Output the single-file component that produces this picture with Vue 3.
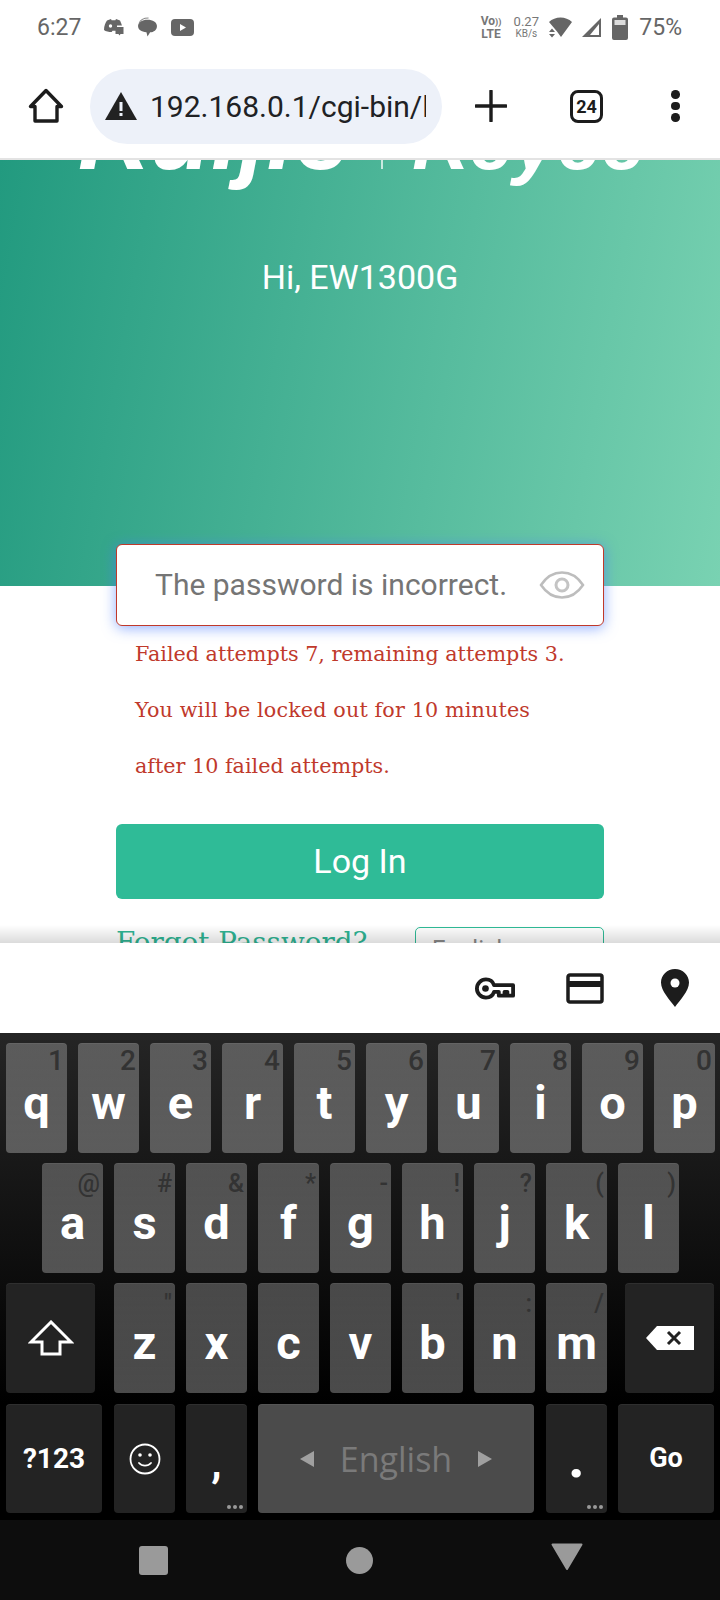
<script setup>
const row1 = [['q','1'],['w','2'],['e','3'],['r','4'],['t','5'],['y','6'],['u','7'],['i','8'],['o','9'],['p','0']]
const row2 = [['a','@'],['s','#'],['d','&'],['f','*'],['g','-'],['h','!'],['j','?'],['k','('],['l',')']]
const row3 = [['z','"'],['x',''],['c',''],['v',''],['b',"'"],['n',':'],['m','/']]
</script>

<template>
  <div class="phone">
    <header class="status">
      <span class="time">6:27</span>
      <svg class="st discord" width="21" height="18" viewBox="0 0 21 18"><path fill="#666" d="M4 2.500 8 1l.6 1.200h3.800L13 1l4 1.500c1 2 2 5 2 5h-5v5.200H9.500l-.8 1.300C6 14 2.500 13.500 1 12c0-4 1.500-7.500 3-9.500z"/><circle cx="7.500" cy="8" r="1.700" fill="#fff"/><path fill="#666" d="M12.500 9h8v7h-3l-1 1.500-1-1.500h-3z"/></svg>
      <svg class="st bubble" width="21" height="20" viewBox="0 0 20 19"><path fill="#666" d="M10 2.500c5 0 9 2.200 9 6s-3 6-6.500 6L10 18.500l-1-4C4 14 1 12 1 8.500s4-6 9-6z"/><path fill="none" stroke="#888" d="M2 6c1-3 4-5 9-5"/></svg>
      <svg class="st yt" width="23" height="17" viewBox="0 0 23 17"><rect width="23" height="17" rx="4" fill="#666"/><path fill="#fff" d="M9 5l6 3.500L9 12z"/></svg>
      <span class="spacer"></span>
      <div class="volte"><span>Vo<i>))</i></span><span>LTE</span></div>
      <div class="speed"><span>0.27</span><span>KB/s</span></div>
      <svg class="st wifi" width="25" height="24" viewBox="0 0 25 24"><path fill="#666" d="M1 7c6-6 17-6 23 0L13 22l-4-5.500z"/><path fill="#666" d="M1 17h6l-3-3.500zM1 19h6l-3 3.500z"/></svg>
      <svg class="st signal" width="21" height="21" viewBox="0 0 21 21"><path fill="#666" d="M20 1v19H1z"/><path fill="#fff" d="M18 7v11h-9z"/></svg>
      <svg class="st batt" width="16" height="25" viewBox="0 0 16 25"><path fill="#666" d="M5 0h6v2.500h3a2 2 0 0 1 2 2V23a2 2 0 0 1-2 2H2a2 2 0 0 1-2-2V4.500a2 2 0 0 1 2-2h3z"/><rect x="2.500" y="5" width="11" height="5" fill="#ddd"/></svg>
      <span class="pct">75%</span>
    </header>

    <nav class="toolbar">
      <svg class="home" width="36" height="36" viewBox="0 0 36 36"><path fill="none" stroke="#1c1c1c" stroke-width="3.400" stroke-linejoin="round" d="M18 2.500 2.500 18.500H7V33h22V18.500h4.500z"/></svg>
      <div class="omnibox">
        <svg width="32" height="28" viewBox="0 0 32 28"><path fill="#222" d="M16 0 32 28H0z"/><rect x="14.500" y="10" width="3" height="9" fill="#edf1f9"/><rect x="14.500" y="21" width="3" height="3" fill="#edf1f9"/></svg>
        <span class="url">192.168.0.1/cgi-bin/luci</span>
      </div>
      <svg class="plus" width="32" height="32" viewBox="0 0 32 32"><path stroke="#1c1c1c" stroke-width="3.400" stroke-linecap="round" d="M16 1v30M1 16h30"/></svg>
      <div class="tabs">24</div>
      <div class="dots"><i></i><i></i><i></i></div>
    </nav>

    <main class="page">
      <section class="hero">
        <div class="logo"><span class="ruijie">Ruijie</span><b></b><span class="reyee">Reyee</span></div>
        <h1>Hi, EW1300G</h1>
      </section>
      <form class="form" @submit.prevent>
        <div class="field">
          <span class="ph">The password is incorrect.</span>
          <svg class="eye" width="46" height="30" viewBox="0 0 46 30"><path fill="none" stroke="#bdbdbd" stroke-width="2.500" d="M2 15C8 6 15 2.500 23 2.500S38 6 44 15c-6 9-13 12.500-21 12.500S8 24 2 15z"/><circle cx="23" cy="15" r="6" fill="none" stroke="#c4c4c4" stroke-width="3"/></svg>
        </div>
        <div class="errors">
          <p>Failed attempts 7, remaining attempts 3.</p>
          <p class="loose">You will be locked out for 10 minutes</p>
          <p>after 10 failed attempts.</p>
        </div>
        <button class="login" type="button">Log In</button>
        <div class="links">
          <a class="forgot">Forgot Password?</a>
          <div class="lang">English</div>
        </div>
      </form>
      <div class="fade"></div>
    </main>

    <div class="accessory">
      <svg class="a-key" width="40" height="23" viewBox="0 0 42 24"><path fill="none" stroke="#1c1c1c" stroke-width="4" stroke-linejoin="round" d="M11.500 2.500c4.500 0 7.500 3 8.500 6h20v11h-6v-4h-3v4h-6v-4h-5c-1 3-4 6-8.500 6a9.500 9.500 0 0 1 0-19z"/><circle cx="11" cy="12" r="3.500" fill="#1c1c1c"/></svg>
      <svg class="a-card" width="38" height="31" viewBox="0 0 38 31"><rect x="2" y="2" width="34" height="27" rx="2" fill="none" stroke="#1c1c1c" stroke-width="3.500"/><rect x="2" y="8" width="34" height="6" fill="#1c1c1c"/></svg>
      <svg width="28" height="38" viewBox="0 0 28 38"><path fill="#1c1c1c" d="M14 0c7.700 0 14 6 14 13.500C28 22 19 31 14 38 9 31 0 22 0 13.500 0 6 6.300 0 14 0z"/><circle cx="14" cy="14" r="4.500" fill="#fff"/></svg>
    </div>

    <section class="keyboard">
      <div class="row">
        <div v-for="k in row1" :key="k[0]" class="key"><span class="hint big">{{ k[1] }}</span>{{ k[0] }}</div>
      </div>
      <div class="row r2">
        <div v-for="k in row2" :key="k[0]" class="key"><span class="hint">{{ k[1] }}</span>{{ k[0] }}</div>
      </div>
      <div class="row r3">
        <div class="key fn wide-a">
          <svg width="46" height="36" viewBox="0 0 46 36"><path fill="none" stroke="#fff" stroke-width="3" d="M23 2 3 22h11v12h18V22h11z"/></svg>
        </div>
        <div v-for="k in row3" :key="k[0]" class="key"><span class="hint">{{ k[1] }}</span>{{ k[0] }}</div>
        <div class="key fn wide-a del">
          <svg width="50" height="26" viewBox="0 0 50 26"><path fill="#fff" d="M12 1h37v24H12L1 13z"/><path stroke="#222" stroke-width="3" d="M23 7l12 12M35 7 23 19"/></svg>
        </div>
      </div>
      <div class="row r4">
        <div class="key fn sym">?123</div>
        <div class="key fn smile">
          <svg width="32" height="32" viewBox="0 0 32 32"><circle cx="16" cy="16" r="14.500" fill="none" stroke="#fff" stroke-width="1.800"/><circle cx="11" cy="12" r="1.800" fill="#fff"/><circle cx="21" cy="12" r="1.800" fill="#fff"/><path fill="none" stroke="#fff" stroke-width="1.800" stroke-linecap="round" d="M10 20c3 3.500 9 3.500 12 0"/></svg>
        </div>
        <div class="key fn punct">,<span class="more"><i></i><i></i><i></i></span></div>
        <div class="key space">
          <span class="tri left"></span><span class="lang-name">English</span><span class="tri right"></span>
        </div>
        <div class="key fn punct period">.<span class="more"><i></i><i></i><i></i></span></div>
        <div class="key fn sym go">Go</div>
      </div>
    </section>

    <footer class="nav">
      <span class="square"></span>
      <span class="circle"></span>
      <svg width="32" height="28" viewBox="0 0 32 28"><path fill="#9a9a9a" stroke="#9a9a9a" stroke-width="2" stroke-linejoin="round" d="M1.500 1.500h29L16 26z"/></svg>
    </footer>
  </div>
</template>

<style scoped>
.phone {
  width: 720px;
  height: 1600px;
  display: flex;
  flex-direction: column;
  overflow: hidden;
  background: #fff;
  font-family: Roboto, sans-serif;
}
.status {
  height: 54px;
  flex: none;
  display: flex;
  align-items: center;
  padding: 0 38px 0 37px;
  color: #666;
}
.time { font-size: 23px; width: 66px; }
.st { flex: none; }
.discord { margin-right: 13px; }
.bubble { margin-right: 13px; }
.spacer { flex: 1; }
.volte, .speed {
  display: flex;
  flex-direction: column;
  align-items: center;
  font-family: Roboto, sans-serif;
  color: #777;
  line-height: 1;
}
.volte { font-size: 12px; font-weight: 700; margin-right: 11px; gap: 1px; }
.volte i { font-style: normal; font-size: 9px; }
.speed { margin-right: 8px; width: 28px; }
.speed span:first-child { font-size: 13px; }
.speed span:last-child { font-size: 10px; margin-top: 1px; }
.wifi { margin-right: 8px; }
.signal { margin-right: 10px; }
.batt { margin-right: 11px; }
.pct { font-size: 23px; }

.toolbar {
  height: 106px;
  flex: none;
  box-sizing: border-box;
  border-bottom: 2px solid #e3e3e3;
  display: flex;
  align-items: center;
  position: relative;
}
.home { margin-left: 28px; flex: none; }
.omnibox {
  width: 352px;
  height: 75px;
  margin-left: 26px;
  border-radius: 38px;
  background: #edf1f9;
  display: flex;
  align-items: center;
  flex: none;
  box-sizing: border-box;
  padding-left: 15px;
  overflow: hidden;
}
.url {
  display: block;
  width: 276px;
  margin-left: 13px;
  overflow: hidden;
  white-space: nowrap;
  font-size: 30px;
  color: #202124;
}
.plus { margin-left: 33px; flex: none; }
.tabs {
  width: 33px;
  height: 33px;
  margin-left: 63px;
  flex: none;
  box-sizing: border-box;
  border: 3.500px solid #1c1c1c;
  border-radius: 8px;
  display: flex;
  align-items: center;
  justify-content: center;
  font-size: 18px;
  font-weight: 700;
  color: #1c1c1c;
}
.dots {
  margin-left: 68px;
  display: flex;
  flex-direction: column;
  gap: 3px;
}
.dots i { width: 8.500px; height: 8.500px; border-radius: 50%; background: #1c1c1c; display: block; }

.page {
  flex: 1;
  min-height: 0;
  overflow: hidden;
  position: relative;
}
.hero {
  height: 426px;
  background: linear-gradient(100deg, #229a7f 0%, #79d2b2 100%);
  color: #fff;
  overflow: hidden;
}
.logo {
  height: 60px;
  margin-top: -56px;
  display: flex;
  align-items: baseline;
  font-family: "Liberation Sans", sans-serif;
  font-style: italic;
  font-weight: 700;
  line-height: 60px;
  padding-left: 78px;
  white-space: nowrap;
}
.ruijie { font-size: 100px; }
.reyee { font-size: 79px; }
.logo b {
  width: 2px;
  height: 60px;
  background: rgba(255,255,255,.7);
  margin: 0 29px 0 31px;
}
.hero h1 {
  margin: 93px 0 0;
  text-align: center;
  font-weight: 400;
  font-size: 34px;
  line-height: 40px;
}
.form {
  width: 488px;
  margin: -42px auto 0;
  position: relative;
}
.field {
  height: 82px;
  box-sizing: border-box;
  border: 1px solid #c0392b;
  border-radius: 6px;
  background: #fff;
  box-shadow: 0 2px 14px rgba(70,120,255,.6);
  display: flex;
  align-items: center;
  padding-left: 38px;
}
.ph { font-size: 30px; color: #757575; white-space: nowrap; margin-top: -1px; }
.eye { margin-left: auto; margin-right: 18px; }
.errors {
  padding-left: 19px;
  color: #c0392b;
  font-family: "DejaVu Serif", serif;
  font-size: 20.700px;
  line-height: 56px;
}
.errors p { margin: 0; white-space: nowrap; }
.errors .loose { letter-spacing: .14px; }
.login {
  display: block;
  width: 100%;
  height: 75px;
  margin-top: 30px;
  border: 0;
  border-radius: 6px;
  background: #2fbb97;
  color: #fff;
  font-family: Roboto, sans-serif;
  font-size: 34px;
  padding: 0 0 2px;
}
.links {
  display: flex;
  justify-content: space-between;
  align-items: flex-start;
  margin-top: 28px;
}
.forgot {
  font-family: "DejaVu Serif", serif;
  font-size: 27.800px;
  color: #2fb594;
  line-height: 32px;
  white-space: nowrap;
}
.lang {
  width: 189px;
  height: 60px;
  box-sizing: border-box;
  border: 1px solid #2fbb97;
  border-radius: 5px;
  padding: 7px 0 0 16px;
  color: #8a8a8a;
  font-size: 24px;
}
.fade {
  position: absolute;
  left: 0;
  right: 0;
  bottom: 0;
  height: 18px;
  background: linear-gradient(rgba(0,0,0,0), rgba(0,0,0,.14));
}

.accessory {
  height: 90px;
  flex: none;
  background: #fff;
  display: flex;
  align-items: center;
  justify-content: flex-end;
  padding-right: 31px;
}
.accessory svg { flex: none; }
.a-key { margin-right: 51px; }
.a-card { margin-right: 57px; }

.keyboard {
  height: 487px;
  flex: none;
  box-sizing: border-box;
  padding: 10px 6px 7px;
  background: linear-gradient(#252525 0%, #000 76%);
  display: flex;
  flex-direction: column;
  gap: 10px;
}
.row {
  display: flex;
  gap: 11px;
  height: 110px;
}
.r2 { padding-left: 36px; }
.key {
  position: relative;
  width: 61px;
  flex: none;
  box-sizing: border-box;
  border-radius: 4px;
  background: linear-gradient(rgba(255,255,255,.25), rgba(255,255,255,.29));
  box-shadow: inset 0 1px 0 rgba(255,255,255,.06);
  display: flex;
  align-items: center;
  justify-content: center;
  color: #fff;
  font-size: 47px;
  font-weight: 700;
  line-height: 1;
  padding-top: 8px;
}
.hint {
  position: absolute;
  top: 7px;
  right: 3px;
  font-size: 25px;
  font-weight: 500;
  color: #333;
  line-height: 1.1;
}
.hint.big { font-size: 28px; top: 3px; }
.fn {
  background: #232323;
  padding-top: 0;
}
.wide-a { width: 89px; }
.r3 .wide-a + .key { margin-left: 8px; }
.r3 .del { margin-left: 7px; }
.r4 { height: 109px; margin-top: 1px; }
.sym { width: 96px; font-size: 28px; }
.smile { margin-left: 1px; }
.go { font-size: 27px; }
.punct { font-size: 42px; padding-top: 9px; }
.punct.period { margin-left: 1px; font-size: 58px; padding-top: 0; padding-bottom: 4px; }
.more {
  position: absolute;
  right: 4px;
  bottom: 4px;
  display: flex;
  gap: 2px;
}
.more i { width: 4px; height: 4px; border-radius: 50%; background: #999; display: block; }
.space {
  width: 276px;
  background: #4b4b4b;
  padding-top: 0;
  font-weight: 400;
  gap: 26px;
}
.lang-name {
  font-family: "Open Sans", sans-serif;
  font-size: 34px;
  font-weight: 400;
  color: #7a7a7a;
}
.tri { width: 0; height: 0; border-top: 8px solid transparent; border-bottom: 8px solid transparent; }
.tri.left { border-right: 14px solid #a0a0a0; }
.tri.right { border-left: 14px solid #a0a0a0; }

.nav {
  height: 80px;
  flex: none;
  background: #0d0d0d;
  display: flex;
  align-items: center;
  position: relative;
  padding-left: 139px;
}
.square { width: 29px; height: 29px; border-radius: 3px; background: #9a9a9a; flex: none; }
.circle { width: 27px; height: 27px; border-radius: 50%; background: #9a9a9a; margin-left: 178px; flex: none; }
.nav svg { margin-left: 178px; margin-bottom: 6px; flex: none; }
</style>
